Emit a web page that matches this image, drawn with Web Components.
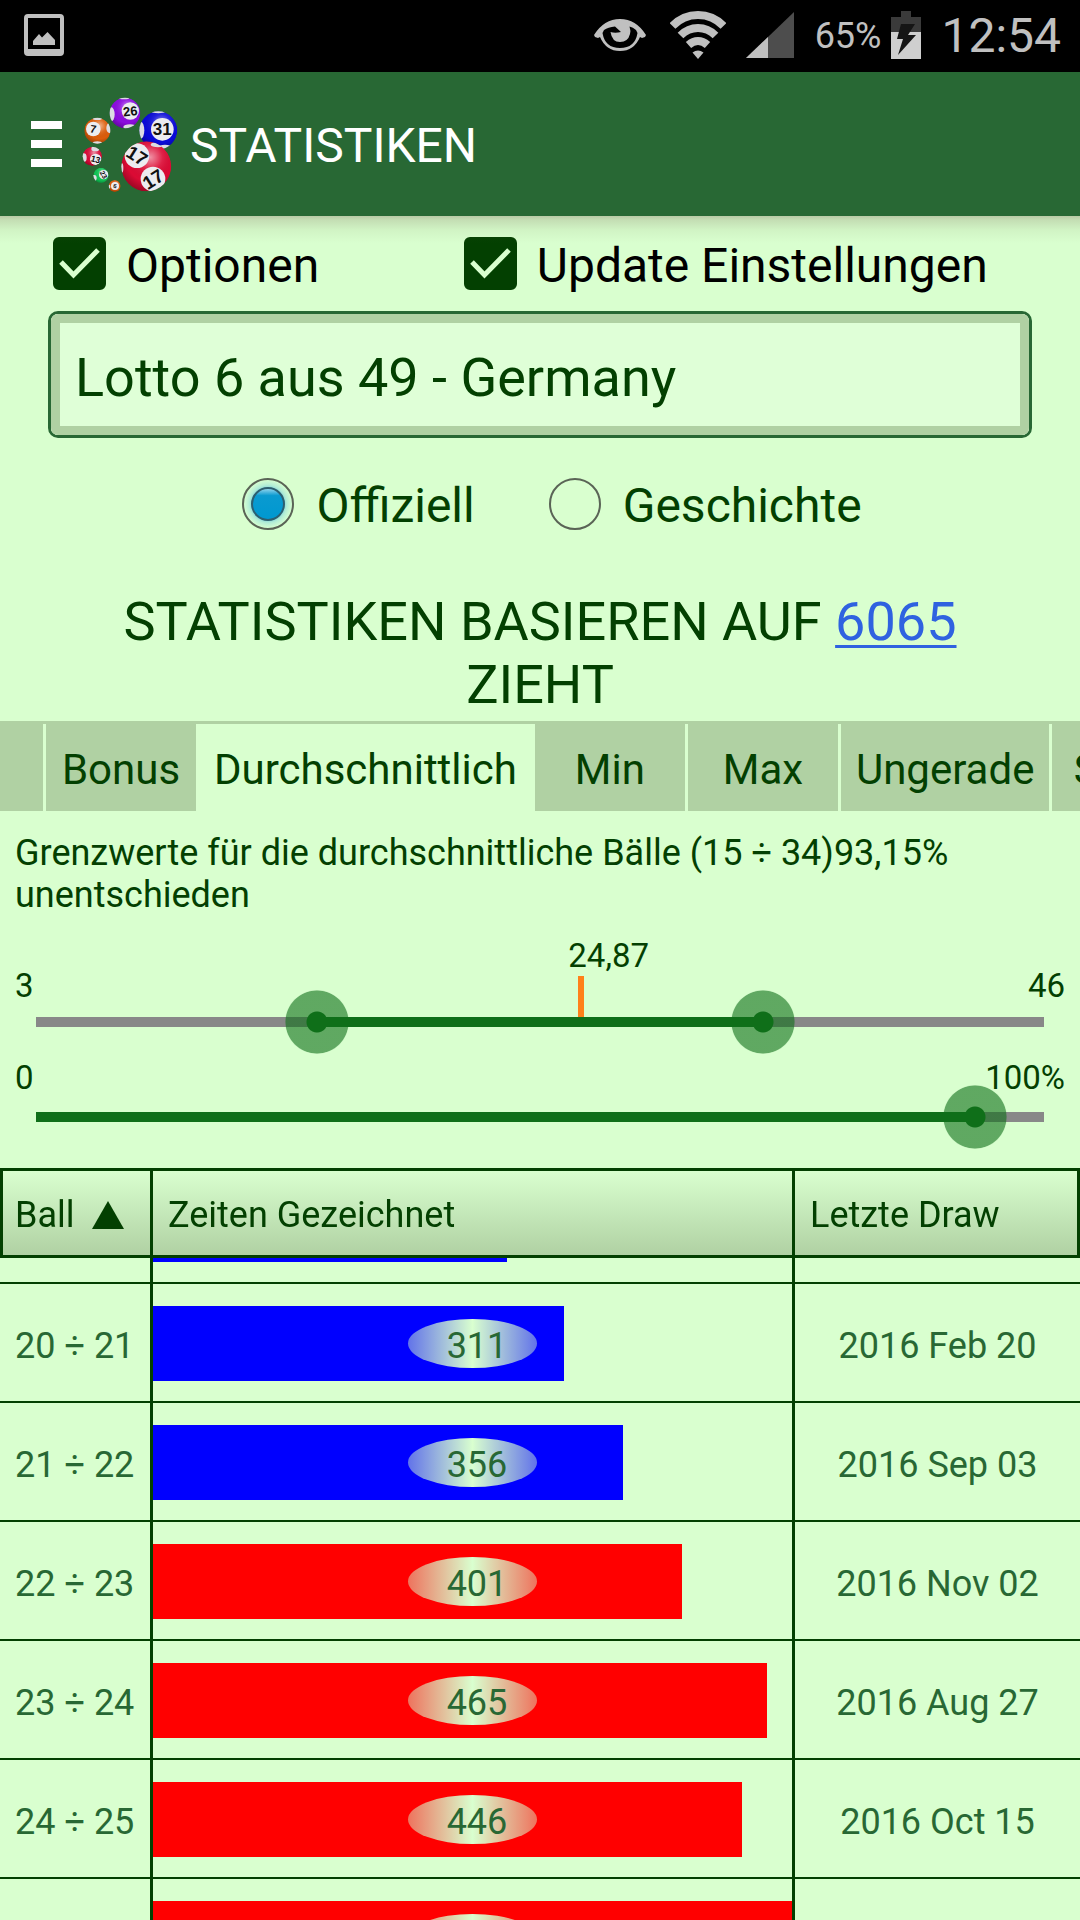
<!DOCTYPE html>
<html lang="de">
<head>
<meta charset="utf-8">
<meta name="viewport" content="width=device-width, initial-scale=1">
<title>Statistiken</title>
<style>
  :root {
    --page: #d9ffcf;
    --field: #dfffd7;
    --brand: #286834;
    --ink: #034001;
    --soft: #b0d1a3;
    --fill: #0f6f19;
    --rail: #888888;
  }
  body {
    margin: 0;
    background: var(--page);
    color: var(--ink);
    font-family: Roboto, "Noto Sans", sans-serif;
  }
</style>
</head>
<body>
<lotto-app></lotto-app>

<script>
/* Attaches an open shadow root holding the given markup. */
function shadow(host, html) {
  const root = host.attachShadow({ mode: 'open' });
  root.innerHTML = '<style>*{box-sizing:border-box}</style>' + html;
  return root;
}

class StatusBar extends HTMLElement {
  constructor() {
    super();
    shadow(this, `
      <style>
        :host { display: flex; align-items: center; height: 72px; flex: none; padding: 0 19px 0 24px; background: #000; color: #c0c0c0; }
        svg { display: block; flex: none; }
        .photo, .eye, .wifi, .signal, .battery { margin-bottom: 2px; }
        .right { display: flex; align-items: center; margin-left: auto; }
        .eye { margin-right: 24px; }
        .wifi { margin-right: 20px; }
        .signal { margin-right: 21px; }
        .pct { font-size: 36px; line-height: 42px; margin-right: 10px; }
        .battery { margin-right: 20px; }
        .time { font-size: 48px; line-height: 56px; }
      </style>
      <svg class="photo" width="40" height="42" viewBox="0 0 40 42" aria-hidden="true">
        <path fill="#c0c0c0" fill-rule="evenodd" d="M4 0H36Q40 0 40 4V38Q40 42 36 42H4Q0 42 0 38V4Q0 0 4 0ZM4 4V35H36V4Z"/>
        <path fill="#c0c0c0" d="M9 31V27L15 20L18 23.500L23.500 18L31 26V31Z"/>
      </svg>
      <div class="right">
        <svg class="eye" width="52" height="34" viewBox="0 0 52 34" aria-hidden="true">
          <path fill="#c0c0c0" fill-rule="evenodd" d="M0 17Q10 1 26 1T52 17L51 19L48 20L46 19Q40 33 26 33T6 19L4 20L1 19ZM8.500 15Q11 30 26 30T43.500 15L42 12Q39 9 35.500 8.500Q37 13 36 16Q34 24 26 24Q18 24 16.500 14Q21 15.500 27 14L21 8.500Q14 9 10 12Z"/>
        </svg>
        <svg class="wifi" width="56" height="50" viewBox="0 0 56 50" aria-hidden="true">
          <g fill="none" stroke="#c0c0c0">
            <path stroke-width="8" d="M2.500 16Q13 5 28 5T53.500 16"/>
            <path stroke-width="8" d="M10.500 25.500Q18 18 28 18T45.500 25.500"/>
            <path stroke-width="8" d="M18.500 35Q23 31 28 31T37.500 35"/>
          </g>
          <path fill="#c0c0c0" d="M22.500 42.500Q28 38.500 33.500 42.500L28 49Z"/>
        </svg>
        <svg class="signal" width="48" height="48" viewBox="0 0 48 48" aria-hidden="true">
          <path fill="#4d4d4d" d="M0 47L48 1V47Z"/><path fill="#c0c0c0" d="M0 47L22 26V47Z"/>
        </svg>
        <span class="pct">65%</span>
        <svg class="battery" width="30" height="48" viewBox="0 0 30 48" aria-hidden="true">
          <path fill="#3a3a3a" d="M10 0H20V6H30V21H0V6H10Z"/>
          <path fill="#cfcfcf" d="M0 21H30V48H0Z"/>
          <path fill="#151515" d="M10 13H24L17 24H25L7 44L12 28H6Z"/>
        </svg>
        <span class="time">12:54</span>
      </div>`);
  }
}

class LottoLogo extends HTMLElement {
  constructor() {
    super();
    /* x, y, radius, colour, side patches [x, y, rx, ry], labels [x, y, r, text, angle] */
    const balls = [
      [134, 302, 18, '#d9580a', [[118, 304, 3, 6]], [[135, 302, 12, '6', 10]]],
      [93, 270, 23, '#10c455', [[73, 278, 7, 9]], [[101, 268, 14, '23', 60]]],
      [67, 213, 29, '#d80a38', [[41, 217, 9, 13], [76, 190, 12, 8]], [[77, 222, 17, '13', 15]]],
      [82, 136, 39, '#dc5c0a', [[118, 128, 9, 15], [82, 100, 14, 4], [82, 173, 14, 5]], [[70, 131, 22, '7', 10]]],
      [165, 83, 46, '#8c0ce0', [[124, 87, 10, 21], [162, 37, 16, 5], [180, 125, 20, 8]], [[181, 77, 26, '26', -6]]],
      [265, 135, 57, '#0a0ad8', [[213, 135, 10, 25], [265, 79, 20, 5], [285, 186, 20, 8]], [[277, 132, 34, '31', 0]]],
      [229, 243, 75, '#dc0a34', [[156, 248, 4, 14], [264, 178, 22, 8]], [[201, 211, 37, '17', 32], [249, 281, 37, '17', -32]]]
    ];
    const drawn = balls.map(([x, y, r, c, sides, labels], i) => `
      <clipPath id="b${i}"><circle cx="${x}" cy="${y}" r="${r}"/></clipPath>
      <g clip-path="url(#b${i})">
        <circle cx="${x}" cy="${y}" r="${r}" fill="${c}"/>
        <circle cx="${x}" cy="${y}" r="${r}" fill="url(#shine)"/>
        ${sides.map(s => `<ellipse cx="${s[0]}" cy="${s[1]}" rx="${s[2]}" ry="${s[3]}" fill="#dcdce2"/>`).join('')}
        ${labels.map(l => `<circle cx="${l[0]}" cy="${l[1]}" r="${l[2]}" fill="#ececf0"/>`).join('')}
      </g>
      ${labels.map(l => `<text x="${l[0]}" y="${l[1]}" dy=".36em" text-anchor="middle" font-size="${Math.round(l[2] * 1.5)}" transform="rotate(${l[4]} ${l[0]} ${l[1]})">${l[3]}</text>`).join('')}`).join('');
    shadow(this, `
      <style>
        :host { display: block; width: 95px; height: 95px; flex: none; }
        svg { display: block; width: 100%; height: 100%; overflow: visible; font-family: "Liberation Sans", sans-serif; font-weight: 700; fill: #111; }
      </style>
      <svg viewBox="39 35 285 285" aria-hidden="true">
        <defs><radialGradient id="shine" cx=".58" cy=".32" r=".7">
          <stop offset="0" stop-color="#fff" stop-opacity=".55"/>
          <stop offset=".35" stop-color="#fff" stop-opacity=".1"/>
          <stop offset=".7" stop-color="#000" stop-opacity="0"/>
          <stop offset="1" stop-color="#000" stop-opacity=".3"/>
        </radialGradient></defs>${drawn}
      </svg>`);
  }
}

class AppHeader extends HTMLElement {
  constructor() {
    super();
    shadow(this, `
      <style>
        :host { display: flex; align-items: center; position: relative; height: 144px; flex: none; padding-left: 31px; background: var(--brand); color: #fff; }
        :host::after { content: ""; position: absolute; left: 0; right: 0; top: 100%; height: 27px; pointer-events: none;
          background: linear-gradient(rgba(110,80,70,.3), rgba(110,90,70,.2) 4px, rgba(110,110,70,.08) 14px, transparent); }
        button { display: flex; flex-direction: column; gap: 11px; width: 31px; padding: 0; border: 0; background: none; margin-right: 21px; }
        button i { display: block; width: 100%; height: 8px; background: #fff; }
        h1 { margin: 0 0 0 12px; padding-top: 3px; font-size: 48px; line-height: 56px; font-weight: 400; }
      </style>
      <button type="button" aria-label="Menü"><i></i><i></i><i></i></button>
      <lotto-logo></lotto-logo>
      <h1><slot></slot></h1>`);
  }
}

class CheckOption extends HTMLElement {
  constructor() {
    super();
    shadow(this, `
      <style>
        :host { display: block; color: #000; font-size: 48px; line-height: 58px; }
        label { display: flex; align-items: flex-start; gap: 20px; white-space: nowrap; }
        input { appearance: none; margin: 0; flex: none; width: 53px; height: 53px; border-radius: 6px; border: 3px solid var(--ink); }
        input:checked { background: var(--ink); }
        .box { display: grid; }
        .box > * { grid-area: 1 / 1; }
        svg { pointer-events: none; visibility: hidden; }
        input:checked + svg { visibility: visible; }
      </style>
      <label>
        <span class="box"><input type="checkbox" checked>
          <svg width="53" height="53" viewBox="0 0 53 53" aria-hidden="true"><path d="M8 25L20.500 38L45 13" fill="none" stroke="#d9ffcf" stroke-width="5"/></svg>
        </span>
        <slot></slot>
      </label>`);
  }
}

class DrawPicker extends HTMLElement {
  constructor() {
    super();
    shadow(this, `
      <style>
        :host { display: block; border: 3px solid var(--brand); border-radius: 10px; overflow: hidden; background: var(--soft); }
        select { appearance: none; display: block; width: 100%; height: 121px; margin: 0; padding: 5px 15px 0; border: 9px solid var(--soft); border-radius: 0;
          background: var(--field); color: var(--ink); font: 400 54px/63px Roboto, sans-serif; }
      </style>
      <select aria-label="Lotterie"><option>${this.getAttribute('value')}</option></select>`);
  }
}

class RadioChoice extends HTMLElement {
  constructor() {
    super();
    const name = this.getAttribute('name');
    shadow(this, `
      <style>
        :host { display: block; font-size: 48px; line-height: 56px; }
        label { display: flex; align-items: flex-start; gap: 22px; white-space: nowrap; }
        input { appearance: none; margin: 0; flex: none; width: 52px; height: 52px; border-radius: 50%; border: 2px solid #5a6456; display: grid; place-items: center; }
        input:checked { background: radial-gradient(circle, #6cc9dc 0 14px, #b4eed6 19px, #d4fdd0 24px); }
        input:checked::before { content: ""; width: 30px; height: 30px; border-radius: 50%; border: 2px solid #2c5f70;
          background: linear-gradient(#8fd3ec 0, #0a9ad0 22%, #0098d0); }
      </style>
      <label><input type="radio" name="${name}" ${this.hasAttribute('checked') ? 'checked' : ''}><slot></slot></label>`);
  }
}

class TabStrip extends HTMLElement {
  constructor() {
    super();
    const tabs = this.getAttribute('tabs').split(',');
    const current = this.getAttribute('current');
    shadow(this, `
      <style>
        :host { display: block; flex: none; }
        nav { display: flex; gap: 3px; border-top: 3px solid var(--soft); overflow-x: auto; scrollbar-width: none; }
        button { flex: none; height: 87px; min-width: 150px; padding: 4px 15px 0; border: 0; background: var(--soft); color: var(--ink); font: 400 42px/49px Roboto, sans-serif; }
        button[aria-selected="true"] { background: var(--page); }
      </style>
      <nav role="tablist">
        <button type="button" role="tab" aria-selected="false" aria-label="Alle"></button>
        ${tabs.map(t => `<button type="button" role="tab" aria-selected="${t === current}">${t}</button>`).join('')}
      </nav>`);
  }
  connectedCallback() {
    this.shadowRoot.querySelector('nav').scrollLeft = 107;
  }
}

class ValueSlider extends HTMLElement {
  constructor() {
    super();
    const a = n => this.getAttribute(n);
    const min = +a('min'), max = +a('max');
    const values = a('values').split(' ').map(Number);
    const at = v => (v - min) / (max - min) * 100 + '%';
    const from = values.length > 1 ? at(values[0]) : '0%';
    const to = at(values[values.length - 1]);
    shadow(this, `
      <style>
        :host { display: block; font-size: 33px; line-height: 39px; }
        .scale, .track { display: grid; }
        .scale > *, .track > * { grid-area: 1 / 1; }
        .ends { display: flex; justify-content: space-between; align-self: end; padding: 0 15px var(--label-gap, 15px); }
        .mark { margin-left: calc(23px + (100% - 72px) * ${a('mark-at') || 0}); }
        .mark i { display: block; width: 6px; height: 41px; margin: 1px 0 0 10px; background: #ff8019; }
        .track { height: 10px; align-items: center; }
        .rail { height: 10px; margin: 0 36px; background: linear-gradient(90deg, var(--rail) ${from}, var(--fill) ${from} ${to}, var(--rail) ${to}); }
        input { appearance: none; width: auto; height: 64px; margin: -27px 4px; background: none; pointer-events: none; }
        input::-webkit-slider-thumb { appearance: none; pointer-events: auto; width: 64px; height: 64px; border-radius: 50%;
          background: radial-gradient(circle, var(--fill) 10px, rgba(15,111,25,.6) 11px 31px, rgba(15,111,25,.1) 32px); }
      </style>
      <div class="scale">
        <div class="ends"><span>${a('low')}</span><span>${a('high')}</span></div>
        ${a('mark') ? `<div class="mark">${a('mark')}<i></i></div>` : ''}
      </div>
      <div class="track"><div class="rail"></div>
        ${values.map(v => `<input type="range" min="${min}" max="${max}" step="0.01" value="${v}" aria-label="${a('label')}">`).join('')}
      </div>`);
  }
}

class DrawBar extends HTMLElement {
  constructor() {
    super();
    shadow(this, `
      <style>
        :host { display: grid; align-items: center; justify-items: center; height: 75px; }
        .fill, .oval, .value { grid-area: 1 / 1; }
        .fill { justify-self: start; width: ${this.getAttribute('share')}%; height: 75px; background: ${this.getAttribute('tone')}; }
        .oval { width: 129px; height: 49px; border-radius: 50%; background: linear-gradient(90deg, rgba(217,255,207,.45), #d9ffcf 50%, rgba(217,255,207,.45)); }
        .value { padding: 4px 6px 0 15px; }
      </style>
      <div class="fill"></div><div class="oval"></div><span class="value"><slot></slot></span>`);
  }
}

class DrawTable extends HTMLElement {
  constructor() {
    super();
    const top = 484;
    /* range, count, last draw, colour; the outer rows carry only their bar */
    const rows = [
      ['', 268, '', 'blue'],
      ['20 ÷ 21', 311, '2016 Feb 20', 'blue'],
      ['21 ÷ 22', 356, '2016 Sep 03', 'blue'],
      ['22 ÷ 23', 401, '2016 Nov 02', 'red'],
      ['23 ÷ 24', 465, '2016 Aug 27', 'red'],
      ['24 ÷ 25', 446, '2016 Oct 15', 'red'],
      ['', 484, '', 'red']
    ];
    const tones = { blue: '#0000ff', red: '#ff0000' };
    shadow(this, `
      <style>
        :host { display: block; flex: 1; min-height: 0; font-size: 36px; line-height: 42px; }
        .scroll { height: 100%; overflow-y: auto; scrollbar-width: none; }
        table { width: 100%; table-layout: fixed; border-collapse: separate; border-spacing: 0; }
        col.ball { width: 153px; }
        col.date { width: 285px; }
        thead { position: sticky; top: 0; z-index: 1; }
        th { height: 90px; padding: 4px 0 0 15px; text-align: left; font-weight: 400; border: solid var(--ink); border-width: 3px 3px 3px 0;
          background: linear-gradient(var(--page), var(--soft)); }
        th:first-child { border-left-width: 3px; padding-left: 12px; }
        th button { display: flex; align-items: center; gap: 17px; padding: 0; border: 0; background: none; color: inherit; font: inherit; }
        td { height: 119px; padding: 0; border-bottom: 2px solid var(--ink); color: var(--brand); }
        td:not(:last-child) { border-right: 3px solid var(--ink); }
        td.ball { padding: 6px 0 0 15px; white-space: nowrap; }
        td.date { padding-top: 6px; text-align: center; }
        draw-bar { margin-top: 2px; }
      </style>
      <div class="scroll"><table>
        <colgroup><col class="ball"><col><col class="date"></colgroup>
        <thead><tr>
          <th scope="col" aria-sort="ascending"><button type="button">Ball<svg width="32" height="28" viewBox="0 0 32 28" aria-hidden="true"><path d="M16 0L32 28H0Z" fill="#034001"/></svg></button></th>
          <th scope="col">Zeiten Gezeichnet</th>
          <th scope="col">Letzte Draw</th>
        </tr></thead>
        <tbody>${rows.map(([n, v, d, t]) => `<tr>
          <td class="ball">${n}</td>
          <td><draw-bar share="${v / top * 100}" tone="${tones[t]}">${n && v}</draw-bar></td>
          <td class="date">${d}</td></tr>`).join('')}
        </tbody>
      </table></div>`);
  }
  connectedCallback() {
    this.shadowRoot.querySelector('.scroll').scrollTop = 93;
  }
}

class LottoApp extends HTMLElement {
  constructor() {
    super();
    shadow(this, `
      <style>
        :host { display: flex; flex-direction: column; height: 100vh; overflow: hidden; }
        .options { display: grid; grid-template-columns: 2fr 3fr; padding: 21px 0 0 53px; }
        draw-picker { margin: 16px 48px 0; flex: none; }
        .source { display: flex; justify-content: center; gap: 74px; padding: 40px 0 0 24px; }
        h2 { margin: 56px 60px 0; font-size: 54px; line-height: 63px; font-weight: 400; text-align: center; }
        h2 a { color: #2f62e0; text-decoration-thickness: 3px; text-underline-offset: 5px; }
        tab-strip { margin-top: 5px; }
        p { margin: 21px 15px 20px; font-size: 36px; line-height: 42px; }
        .avg { --label-gap: 12px; margin-bottom: 31px; }
        .share { margin-bottom: 46px; }
      </style>
      <status-bar></status-bar>
      <app-header>STATISTIKEN</app-header>
      <div class="options">
        <check-option>Optionen</check-option>
        <check-option>Update Einstellungen</check-option>
      </div>
      <draw-picker value="Lotto 6 aus 49 - Germany"></draw-picker>
      <div class="source">
        <radio-choice name="source" checked>Offiziell</radio-choice>
        <radio-choice name="source">Geschichte</radio-choice>
      </div>
      <h2>STATISTIKEN BASIEREN AUF <a href="#draws">6065</a> ZIEHT</h2>
      <tab-strip tabs="Bonus,Durchschnittlich,Min,Max,Ungerade,Sonst" current="Durchschnittlich"></tab-strip>
      <p>Grenzwerte für die durchschnittliche Bälle (15 ÷ 34)93,15% unentschieden</p>
      <value-slider class="avg" label="Durchschnitt" min="3" max="46" values="15 34" low="3" high="46" mark="24,87" mark-at="0.541"></value-slider>
      <value-slider class="share" label="Anteil" min="0" max="100" values="93.15" low="0" high="100%"></value-slider>
      <draw-table></draw-table>`);
  }
}

customElements.define('status-bar', StatusBar);
customElements.define('lotto-logo', LottoLogo);
customElements.define('app-header', AppHeader);
customElements.define('check-option', CheckOption);
customElements.define('draw-picker', DrawPicker);
customElements.define('radio-choice', RadioChoice);
customElements.define('tab-strip', TabStrip);
customElements.define('value-slider', ValueSlider);
customElements.define('draw-bar', DrawBar);
customElements.define('draw-table', DrawTable);
customElements.define('lotto-app', LottoApp);
</script>
</body>
</html>
